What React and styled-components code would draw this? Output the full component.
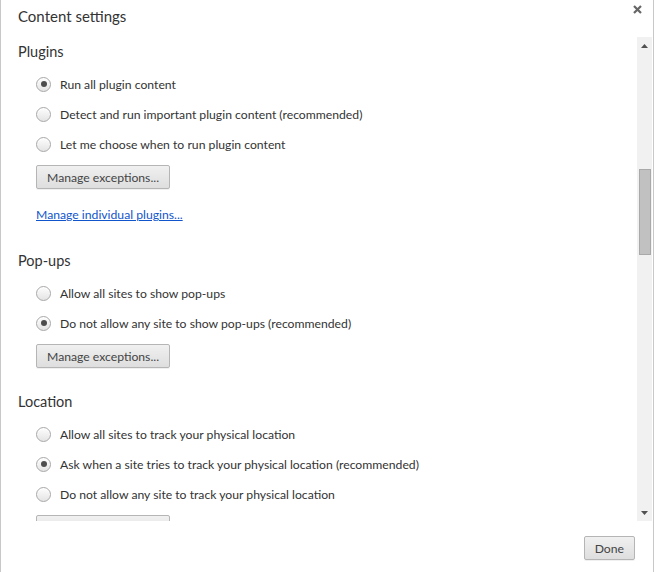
import React from 'react';
import styled, { createGlobalStyle } from 'styled-components';

const Global = createGlobalStyle`
  html, body {
    margin: 0;
    padding: 0;
    background: #fff;
  }
  body {
    font-family: Lato, "Noto Sans", sans-serif;
    color: #333;
  }
`;

const sections = [
  {
    title: 'Plugins',
    options: [
      { label: 'Run all plugin content', checked: true },
      { label: 'Detect and run important plugin content (recommended)' },
      { label: 'Let me choose when to run plugin content' }
    ],
    link: 'Manage individual plugins...'
  },
  {
    title: 'Pop-ups',
    options: [
      { label: 'Allow all sites to show pop-ups' },
      { label: 'Do not allow any site to show pop-ups (recommended)', checked: true }
    ]
  },
  {
    title: 'Location',
    options: [
      { label: 'Allow all sites to track your physical location' },
      { label: 'Ask when a site tries to track your physical location (recommended)', checked: true },
      { label: 'Do not allow any site to track your physical location' }
    ]
  }
];

const App = () => {
  return (
    <>
      <Global />
      <Dialog>
        <Header>
          <Title>Content settings</Title>
          <Close aria-label="close">
            <svg width="9" height="9" viewBox="0 0 9 9">
              <path d="M1 1 L8 8 M8 1 L1 8" stroke="#666" strokeWidth="2.2" />
            </svg>
          </Close>
        </Header>
        <Body>
          <Content>
            {sections.map(s => (
              <Section key={s.title}>
                <SectionTitle>{s.title}</SectionTitle>
                <Options>
                  {s.options.map(o => (
                    <Option key={o.label}>
                      <Radio checked={o.checked} />
                      <span>{o.label}</span>
                    </Option>
                  ))}
                </Options>
                <Button>Manage exceptions...</Button>
                {s.link && <Link href="#">{s.link}</Link>}
              </Section>
            ))}
          </Content>
          <Scrollbar>
            <Arrow>
              <svg width="7" height="4" viewBox="0 0 7 4">
                <path d="M0 4 L3.5 0 L7 4 Z" fill="#505050" />
              </svg>
            </Arrow>
            <Track>
              <Thumb />
            </Track>
            <Arrow>
              <svg width="7" height="4" viewBox="0 0 7 4">
                <path d="M0 0 L3.5 4 L7 0 Z" fill="#505050" />
              </svg>
            </Arrow>
          </Scrollbar>
        </Body>
        <Footer>
          <Button small>Done</Button>
        </Footer>
      </Dialog>
    </>
  );
};

const Dialog = styled.div`
  width: 654px;
  height: 572px;
  box-sizing: border-box;
  border-left: 1px solid #c8c8c8;
  border-right: 1px solid #c8c8c8;
  display: flex;
  flex-direction: column;
  background: #fff;
`;

const Header = styled.div`
  height: 37px;
  display: flex;
  justify-content: space-between;
  align-items: flex-start;
  padding: 0 11px 0 17px;
`;

const Title = styled.h1`
  margin: 7px 0 0;
  font-size: 15px;
  font-weight: normal;
  color: #333;
`;

const Close = styled.div`
  margin-top: 5px;
  display: flex;
`;

const Body = styled.div`
  height: 484px;
  display: flex;
`;

const Content = styled.div`
  flex: 1;
  overflow: hidden;
  padding: 6px 0 0 17px;
`;

const Section = styled.div`
  margin-bottom: 25px;
`;

const SectionTitle = styled.h3`
  margin: 0;
  font-size: 14.5px;
  font-weight: normal;
  color: #333;
  line-height: 18px;
`;

const Options = styled.div`
  margin-top: 8px;
  padding-left: 18px;
  display: flex;
  flex-direction: column;
`;

const Option = styled.label`
  height: 30px;
  display: flex;
  align-items: center;
  gap: 9px;
  font-size: 12.2px;
  color: #333;
`;

const Radio = styled.span`
  width: 13px;
  height: 13px;
  border-radius: 50%;
  border: 1px solid #a8a8a8;
  background: linear-gradient(#fdfdfd, #e4e4e4);
  box-shadow: inset 0 1px 1px #fff;
  display: flex;
  align-items: center;
  justify-content: center;

  &::after {
    content: '';
    display: ${props => (props.checked ? 'block' : 'none')};
    width: 6px;
    height: 6px;
    border-radius: 50%;
    background: #4d4d4d;
  }
`;

const Button = styled.button`
  display: block;
  margin-left: ${props => (props.small ? '0' : '18px')};
  margin-top: ${props => (props.small ? '0' : '6px')};
  height: 24px;
  padding: 0 10px;
  font-family: Lato, "Noto Sans", sans-serif;
  font-size: 12.2px;
  color: #444;
  border: 1px solid #b5b5b5;
  border-radius: 2px;
  background: linear-gradient(#f0f0f0, #dedede);
  box-shadow: 0 1px 0 rgba(0, 0, 0, 0.06);
`;

const Link = styled.a`
  display: inline-block;
  margin: 18px 0 5px 18px;
  font-size: 12.2px;
  color: #1155cc;
  text-decoration: underline;
`;

const Scrollbar = styled.div`
  width: 15px;
  margin-right: 1px;
  background: #f1f1f1;
  display: flex;
  flex-direction: column;
`;

const Arrow = styled.div`
  height: 17px;
  display: flex;
  align-items: center;
  justify-content: center;
`;

const Track = styled.div`
  flex: 1;
  padding: 115px 1px 0 2px;
`;

const Thumb = styled.div`
  height: 86px;
  background: #c1c1c1;
  border: 1px solid #a9a9a9;
  box-sizing: border-box;
`;

const Footer = styled.div`
  flex: 1;
  display: flex;
  justify-content: flex-end;
  align-items: flex-start;
  padding: 15px 18px 0 0;
`;

export default App;
